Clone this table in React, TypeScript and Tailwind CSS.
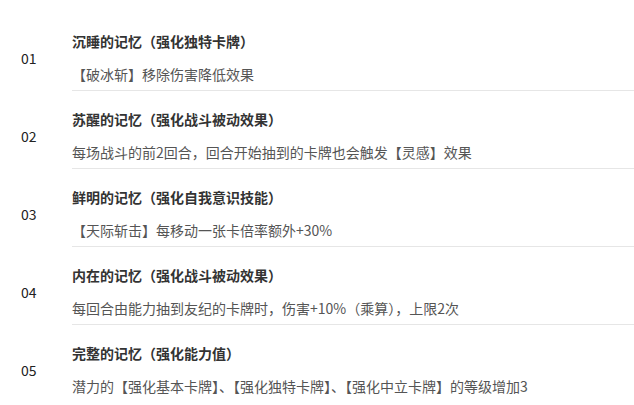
const items = [
  { no: '01', title: '沉睡的记忆（强化独特卡牌）', desc: '【破冰斩】移除伤害降低效果' },
  { no: '02', title: '苏醒的记忆（强化战斗被动效果）', desc: '每场战斗的前2回合，回合开始抽到的卡牌也会触发【灵感】效果' },
  { no: '03', title: '鲜明的记忆（强化自我意识技能）', desc: '【天际斩击】每移动一张卡倍率额外+30%' },
  { no: '04', title: '内在的记忆（强化战斗被动效果）', desc: '每回合由能力抽到友纪的卡牌时，伤害+10%（乘算），上限2次' },
  { no: '05', title: '完整的记忆（强化能力值）', desc: '潜力的【强化基本卡牌】、【强化独特卡牌】、【强化中立卡牌】的等级增加3' },
];

export default function App() {
  return (
    <div
      className="w-[634px] h-[405px] bg-white overflow-hidden pt-[13px]"
      style={{ fontFamily: '"Noto Sans CJK SC", "Noto Sans", sans-serif' }}>
      {items.map((it, i) => (
        <div key={it.no} className="flex items-center">
          <div className="w-[72px] shrink-0 pl-[21px] pt-[12px] text-[14px] leading-[16px] text-[#222]">{it.no}</div>
          <div className={'flex-1 min-w-0 pt-[20px] pb-[8px] ' + (i < items.length - 1 ? 'border-b border-[#e6e6e6]' : 'border-b border-transparent')}>
            <div className="text-[14px] leading-[16px] font-semibold text-[#333] whitespace-nowrap">{it.title}</div>
            <div className="mt-[17px] text-[14px] leading-[16px] text-[#555] whitespace-nowrap">{it.desc}</div>
          </div>
        </div>
      ))}
    </div>
  );
}
